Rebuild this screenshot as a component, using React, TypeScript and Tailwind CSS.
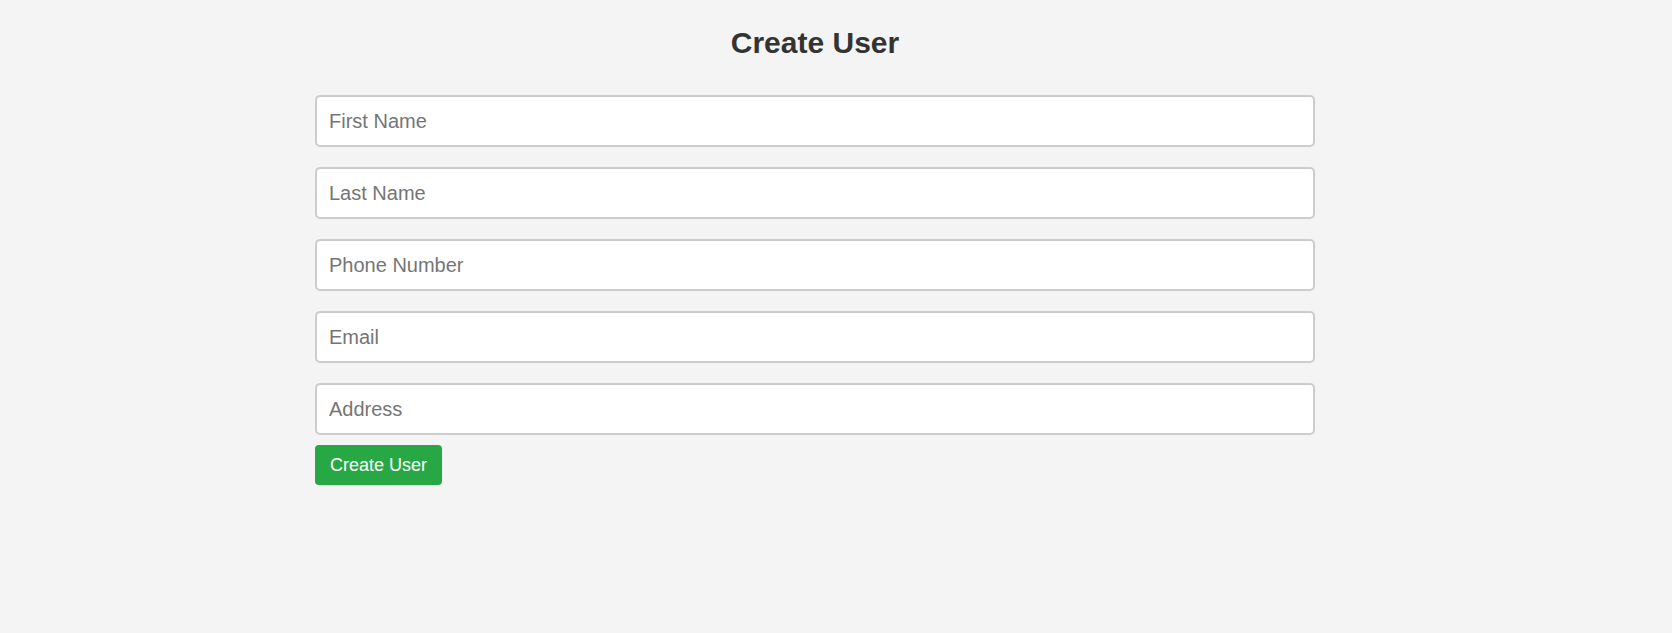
import React from "react";

export default function App() {
  const fields = ["First Name", "Last Name", "Phone Number", "Email", "Address"];
  return (
    <div className="min-h-screen w-full bg-[#f4f4f4] font-['Liberation_Sans',Arial,sans-serif]">
      <div className="ml-[315px] w-[1000px] pt-[26px]">
        <h2 className="text-center text-[30px] font-bold leading-[34px] text-[#333333]">Create User</h2>
        <form className="mt-[35px] flex flex-col" onSubmit={(e) => e.preventDefault()}>
          {fields.map((f, i) => (
            <input
              key={f}
              type="text"
              placeholder={f}
              className={`h-[52px] w-full rounded-[5px] border-2 border-[#cccccc] bg-white px-[12px] text-[20px] text-[#333] outline-none placeholder:text-[#757575] ${i < fields.length - 1 ? "mb-[20px]" : "mb-[10px]"}`}
            />
          ))}
          <div>
            <button
              type="submit"
              className="h-[40px] rounded-[4px] bg-[#28a745] px-[15px] text-[18px] leading-[20px] text-white"
            >
              Create User
            </button>
          </div>
        </form>
      </div>
    </div>
  );
}
